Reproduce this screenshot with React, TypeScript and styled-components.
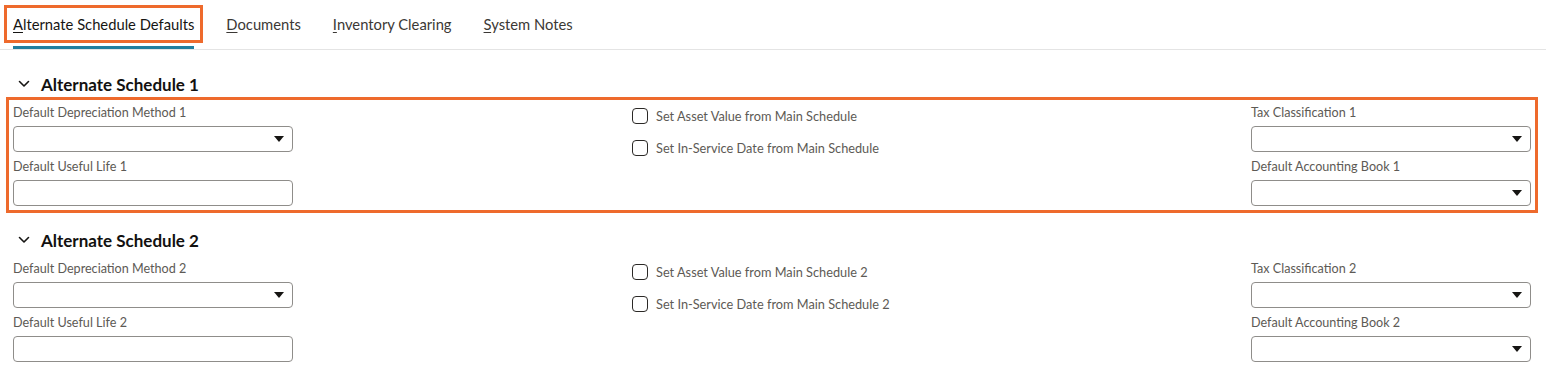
import styled, { createGlobalStyle } from 'styled-components';

const GlobalStyle = createGlobalStyle`
  body {
    margin: 0;
    background: #fff;
    font-family: Lato, "Noto Sans", sans-serif;
    color: #161513;
  }
`;

const ORANGE = '#ee6a2c';

const TabBar = styled.div`
  display: flex;
  gap: 32px;
  height: 50px;
  padding-left: 13px;
  border-bottom: 1px solid #e4e4e4;
  box-sizing: border-box;
`;

const Tab = styled.div<{ $active?: boolean }>`
  display: flex;
  align-items: center;
  height: 49px;
  padding-top: 2px;
  box-sizing: border-box;
  border-bottom: 3px solid ${(p) => (p.$active ? '#227e9e' : 'transparent')};
  font-size: 14.75px;
  color: ${(p) => (p.$active ? '#161513' : '#3b3835')};
`;

const TabLabel = styled.span<{ $highlight?: boolean }>`
  line-height: 20px;
  outline: ${(p) => (p.$highlight ? `3px solid ${ORANGE}` : 'none')};
  outline-offset: 6px;

  u {
    text-decoration-thickness: 1px;
    text-underline-offset: 2px;
  }
`;

const Section = styled.section`
  padding: 20px 15px 0 13px;
`;

const SectionHeader = styled.div`
  display: flex;
  align-items: center;
  gap: 11px;
  height: 28px;
  padding-left: 5px;
  margin-bottom: 6px;
  font-size: 17px;
  font-weight: 700;
  color: #121110;
`;

const Fields = styled.div<{ $highlight?: boolean }>`
  display: grid;
  grid-template-columns: repeat(3, 280px);
  justify-content: space-between;
  outline: ${(p) => (p.$highlight ? `3px solid ${ORANGE}` : 'none')};
  outline-offset: 4px;
`;

const Column = styled.div<{ $gap: number }>`
  display: flex;
  flex-direction: column;
  gap: ${(p) => p.$gap}px;
`;

const Field = styled.div`
  display: flex;
  flex-direction: column;
  gap: 4px;
`;

const Label = styled.label`
  font-size: 12.6px;
  line-height: 18px;
  color: #5d5a55;
`;

const Box = styled.div`
  display: flex;
  align-items: center;
  justify-content: flex-end;
  height: 26px;
  box-sizing: border-box;
  border: 1px solid #8f8d8a;
  border-radius: 4px;
  background: #fff;
  padding-right: 8px;
`;

const Caret = styled.span`
  width: 0;
  height: 0;
  border-left: 5px solid transparent;
  border-right: 5px solid transparent;
  border-top: 6px solid #161513;
`;

const CheckRow = styled.label`
  display: flex;
  align-items: center;
  gap: 8px;
  height: 24px;
  font-size: 12.75px;
  color: #5d5a55;
`;

const CheckBox = styled.span`
  width: 16px;
  height: 16px;
  box-sizing: border-box;
  border: 1px solid #2b2926;
  border-radius: 4px;
`;

const Chevron = () => (
  <svg width="12" height="8" viewBox="0 0 12 8" fill="none">
    <path d="M1.5 1.5 6 6l4.5-4.5" stroke="#161513" strokeWidth="1.6" strokeLinecap="round" strokeLinejoin="round" />
  </svg>
);

const SelectField = ({ label }: { label: string }) => (
  <Field>
    <Label>{label}</Label>
    <Box>
      <Caret />
    </Box>
  </Field>
);

const TextField = ({ label }: { label: string }) => (
  <Field>
    <Label>{label}</Label>
    <Box />
  </Field>
);

const Schedule = ({ n, highlight }: { n: number; highlight?: boolean }) => {
  const suffix = n === 1 ? '' : ` ${n}`;
  return (
    <Section>
      <SectionHeader>
        <Chevron />
        Alternate Schedule {n}
      </SectionHeader>
      <Fields $highlight={highlight}>
        <Column $gap={6}>
          <SelectField label={`Default Depreciation Method ${n}`} />
          <TextField label={`Default Useful Life ${n}`} />
        </Column>
        <Column $gap={8}>
          <CheckRow>
            <CheckBox />
            Set Asset Value from Main Schedule{suffix}
          </CheckRow>
          <CheckRow>
            <CheckBox />
            Set In-Service Date from Main Schedule{suffix}
          </CheckRow>
        </Column>
        <Column $gap={6}>
          <SelectField label={`Tax Classification ${n}`} />
          <SelectField label={`Default Accounting Book ${n}`} />
        </Column>
      </Fields>
    </Section>
  );
};

const App = () => (
  <>
    <GlobalStyle />
    <TabBar>
      <Tab $active>
        <TabLabel $highlight>
          <u>A</u>lternate Schedule Defaults
        </TabLabel>
      </Tab>
      <Tab>
        <TabLabel>
          <u>D</u>ocuments
        </TabLabel>
      </Tab>
      <Tab>
        <TabLabel>
          <u>I</u>nventory Clearing
        </TabLabel>
      </Tab>
      <Tab>
        <TabLabel>
          <u>S</u>ystem Notes
        </TabLabel>
      </Tab>
    </TabBar>
    <Schedule n={1} highlight />
    <Schedule n={2} />
  </>
);

export default App;
